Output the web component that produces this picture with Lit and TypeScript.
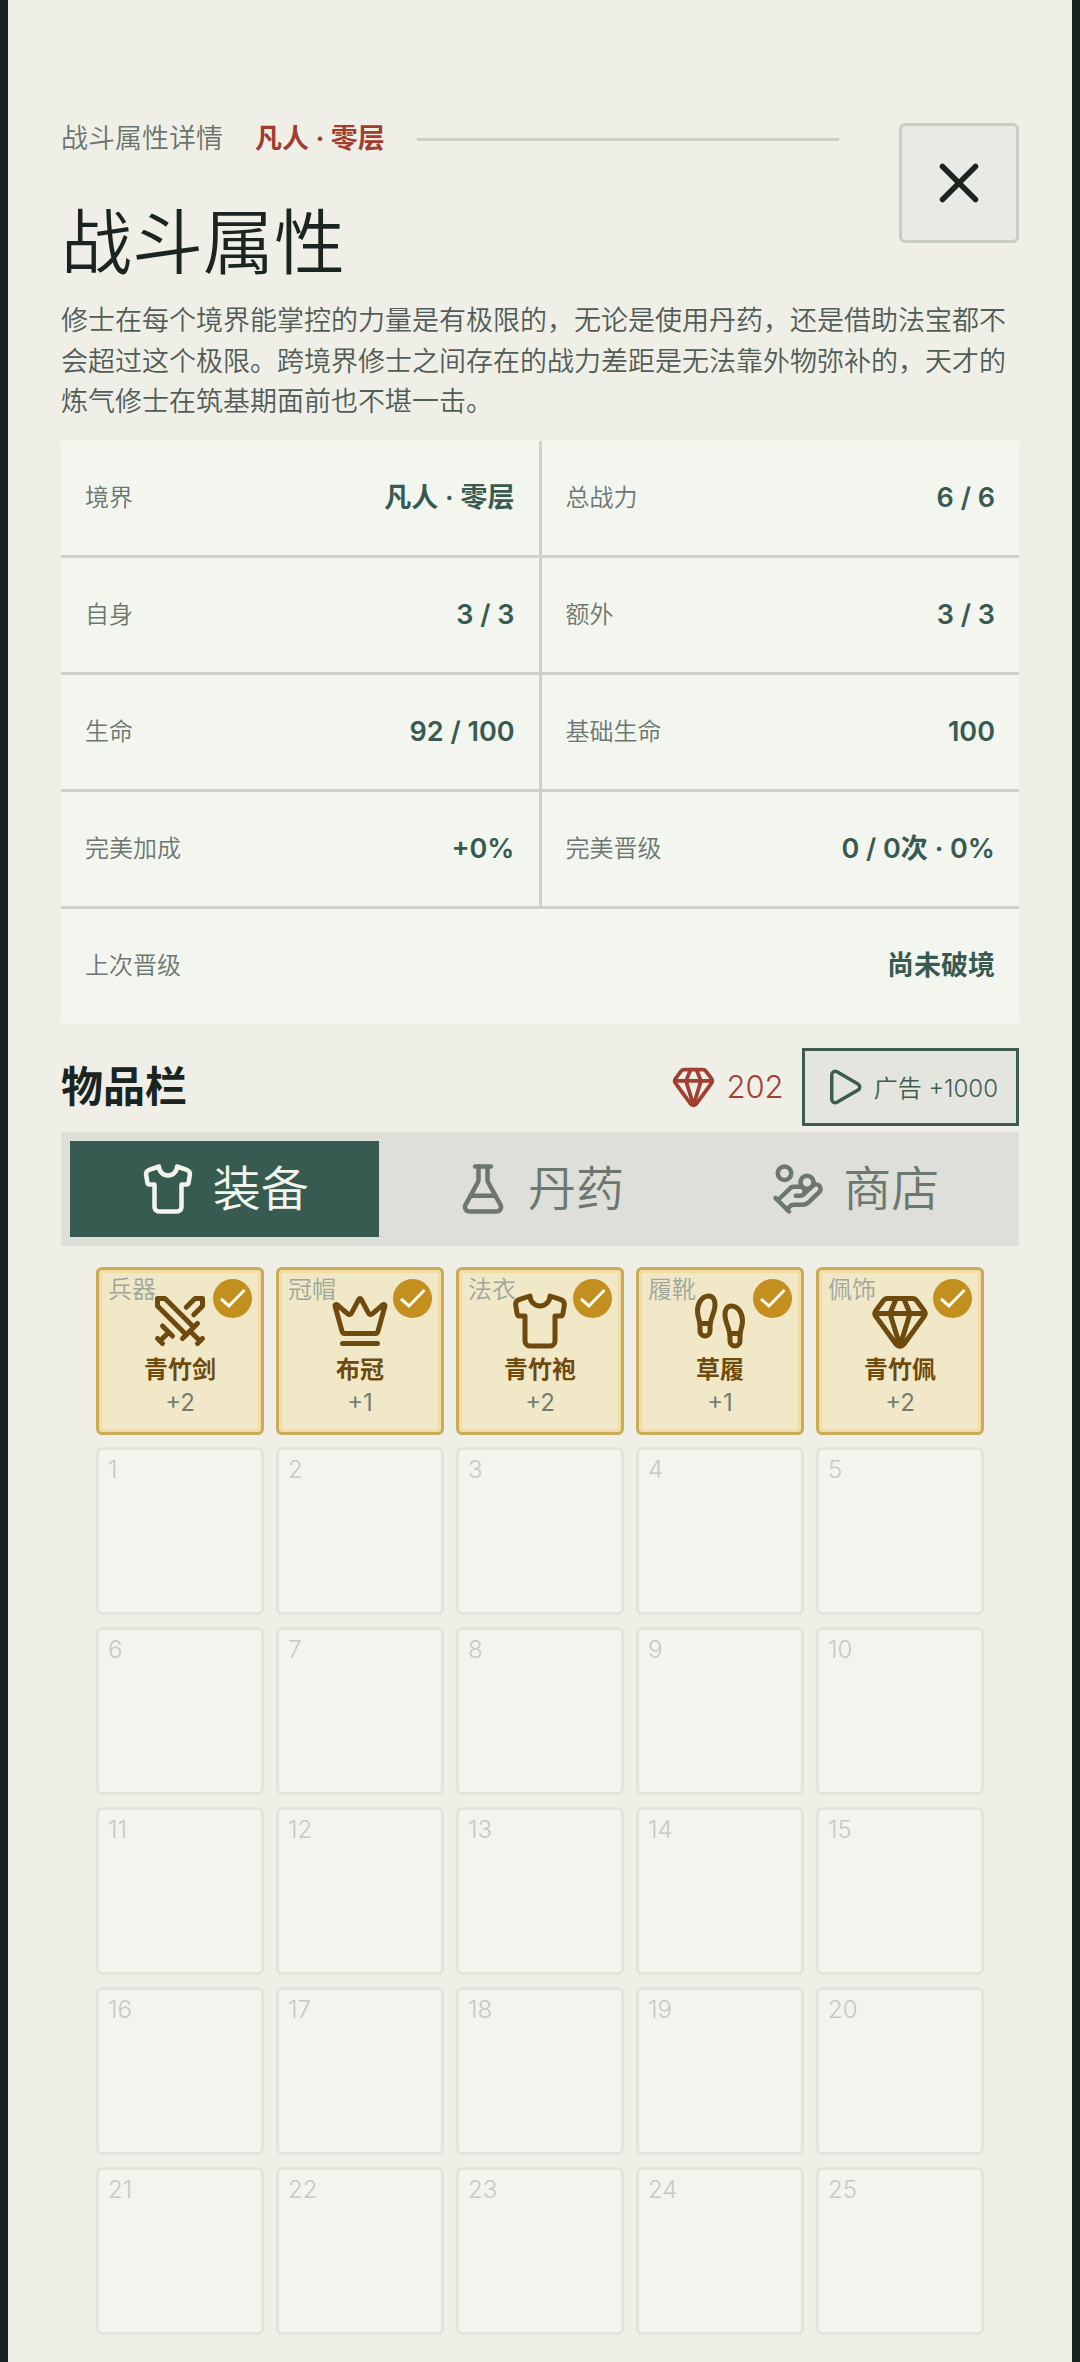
import { LitElement, html, css, svg, nothing, type SVGTemplateResult } from "lit";
import { customElement, property, state } from "lit/decorators.js";
import { classMap } from "lit/directives/class-map.js";

const ICONS: Record<string, SVGTemplateResult> = {
  close: svg`<path d="M18 6 6 18"/><path d="m6 6 12 12"/>`,
  play: svg`<path d="M5 5a2 2 0 0 1 3.008-1.728l11.997 6.998a2 2 0 0 1 .003 3.458l-12 7A2 2 0 0 1 5 19z"/>`,
  gem: svg`<path d="M10.5 3 8 9l4 13 4-13-2.5-6"/><path d="M17 3a2 2 0 0 1 1.6.8l3 4a2 2 0 0 1 .013 2.382l-7.99 10.986a2 2 0 0 1-3.247 0l-7.99-10.986A2 2 0 0 1 2.4 7.8l2.998-3.997A2 2 0 0 1 7 3z"/><path d="M2 9h20"/>`,
  shirt: svg`<path d="M20.38 3.46 16 2a4 4 0 0 1-8 0L3.62 3.46a2 2 0 0 0-1.34 2.23l.58 3.47a1 1 0 0 0 .99.84H6v10c0 1.1.9 2 2 2h8a2 2 0 0 0 2-2V10h2.15a1 1 0 0 0 .99-.84l.58-3.47a2 2 0 0 0-1.34-2.23z"/>`,
  flask: svg`<path d="M14 2v6a2 2 0 0 0 .245.96l5.51 10.08A2 2 0 0 1 18 22H6a2 2 0 0 1-1.755-2.96l5.51-10.08A2 2 0 0 0 10 8V2"/><path d="M6.453 15h11.094"/><path d="M8.5 2h7"/>`,
  coins: svg`<path d="M11 15h2a2 2 0 1 0 0-4h-3c-.6 0-1.1.2-1.4.6L3 17"/><path d="m7 21 1.6-1.4c.3-.4.8-.6 1.4-.6h4c1.1 0 2.1-.4 2.8-1.2l4.6-4.4a2 2 0 0 0-2.75-2.91l-4.2 3.9"/><path d="m2 16 6 6"/><circle cx="16" cy="9" r="2.9"/><circle cx="6" cy="5" r="3"/>`,
  swords: svg`<polyline points="14.5 17.5 3 6 3 3 6 3 17.5 14.5"/><path d="M13 19l6-6M16 16l4 4M19 21l2-2"/><polyline points="14.5 6.5 18 3 21 3 21 6 17.5 9.5"/><path d="M5 14l4 4M7 17l-3 3M3 19l2 2"/>`,
  crown: svg`<path d="M11.562 3.266a.5.5 0 0 1 .876 0L15.39 8.87a1 1 0 0 0 1.516.294L21.183 5.5a.5.5 0 0 1 .798.519l-2.834 10.246a1 1 0 0 1-.956.734H5.81a1 1 0 0 1-.957-.734L2.02 6.02a.5.5 0 0 1 .798-.519l4.276 3.664a1 1 0 0 0 1.516-.294z"/><path d="M5 21h14"/>`,
  footprints: svg`<path d="M4 16v-2.38C4 11.5 2.97 10.5 3 8c.03-2.72 1.49-6 4.5-6C9.37 2 10 3.8 10 5.5c0 3.11-2 5.66-2 8.68V16a2 2 0 1 1-4 0Z"/><path d="M20 20v-2.38c0-2.12 1.03-3.12 1-5.62-.03-2.72-1.49-6-4.5-6C14.63 6 14 7.8 14 9.5c0 3.11 2 5.66 2 8.68V20a2 2 0 1 0 4 0Z"/><path d="M16 17h4"/><path d="M4 13h4"/>`,
};

@customElement("line-icon")
class LineIcon extends LitElement {
  @property() name = "";

  static styles = css`
    :host {
      display: block;
      flex: none;
    }
    .glyph {
      display: block;
      width: 100%;
      height: 100%;
      fill: none;
      stroke: currentColor;
      stroke-width: 2;
      stroke-linecap: round;
      stroke-linejoin: round;
    }
  `;

  render() {
    return html`<svg class="glyph" viewBox="0 0 24 24" aria-hidden="true">${ICONS[this.name]}</svg>`;
  }
}

interface Stat {
  label: string;
  value: string;
  wide?: boolean;
}

const STATS: Stat[] = [
  { label: "境界", value: "凡人 · 零层" },
  { label: "总战力", value: "6 / 6" },
  { label: "自身", value: "3 / 3" },
  { label: "额外", value: "3 / 3" },
  { label: "生命", value: "92 / 100" },
  { label: "基础生命", value: "100" },
  { label: "完美加成", value: "+0%" },
  { label: "完美晋级", value: "0 / 0次 · 0%" },
  { label: "上次晋级", value: "尚未破境", wide: true },
];

const TABS = [
  { label: "装备", icon: "shirt" },
  { label: "丹药", icon: "flask" },
  { label: "商店", icon: "coins" },
];

const GEAR = [
  { slot: "兵器", name: "青竹剑", bonus: "+2", icon: "swords" },
  { slot: "冠帽", name: "布冠", bonus: "+1", icon: "crown" },
  { slot: "法衣", name: "青竹袍", bonus: "+2", icon: "shirt" },
  { slot: "履靴", name: "草履", bonus: "+1", icon: "footprints" },
  { slot: "佩饰", name: "青竹佩", bonus: "+2", icon: "gem" },
];

const EMPTY_SLOTS = Array.from({ length: 25 }, (_, i) => i + 1);

@customElement("app-root")
class AppRoot extends LitElement {
  @state() private tab = 0;

  static styles = css`
    :host {
      display: block;
      box-sizing: border-box;
      min-height: 100vh;
      padding: 0 8px;
      background: #1a2321;
      font-family: Inter, "Noto Sans CJK SC", sans-serif;
      font-size: 27px;
      color: #1a2421;
    }
    * {
      box-sizing: border-box;
      margin: 0;
      padding: 0;
    }
    button {
      font: inherit;
      color: inherit;
      border: 0;
      background: none;
      cursor: pointer;
    }
    .panel {
      min-height: 100vh;
      padding: 123px 53px 27px;
      background: #f0efe7;
    }
    .header {
      display: grid;
      grid-template-columns: 1fr auto;
      column-gap: 60px;
      align-items: start;
    }
    .crumb {
      display: flex;
      align-items: center;
      gap: 32px;
      line-height: 32px;
      font-weight: 350;
      color: #6a746e;
    }
    .rank {
      font-weight: 700;
      color: #a03c30;
    }
    .rule {
      flex: 1;
      height: 3px;
      background: #ced0c8;
    }
    .title {
      margin-top: 48px;
      font-size: 71px;
      font-weight: 350;
      line-height: 78px;
    }
    .close {
      display: grid;
      place-items: center;
      width: 120px;
      height: 120px;
      border: 3px solid #c9cdc6;
      border-radius: 6px;
      background: #e8ebe4;
    }
    .close-icon {
      width: 66px;
      height: 66px;
    }
    .intro {
      margin-top: 20px;
      font-weight: 350;
      line-height: 1.5;
      color: #505d56;
    }
    .stats {
      display: grid;
      grid-template-columns: 1fr 1fr;
      gap: 3px;
      margin-top: 18px;
      background: #cdd1c9;
    }
    .stat {
      display: flex;
      align-items: center;
      justify-content: space-between;
      padding: 36px 24px;
      line-height: 42px;
      background: #f2f6ee;
    }
    .wide {
      grid-column: 1 / -1;
    }
    .stat-label {
      font-size: 24px;
      font-weight: 350;
      color: #6c7771;
    }
    .stat-value {
      font-weight: 600;
      color: #385a50;
    }
    .bag-head {
      display: flex;
      align-items: center;
      margin-top: 25px;
    }
    .bag-title {
      flex: 1;
      font-size: 42px;
      font-weight: 700;
      line-height: 48px;
    }
    .wallet {
      display: flex;
      align-items: center;
      gap: 10px;
      margin-right: 18px;
      font-size: 31px;
      font-weight: 350;
      color: #a03f32;
    }
    .wallet-icon {
      width: 45px;
      height: 45px;
    }
    .ad {
      display: flex;
      align-items: center;
      gap: 9px;
      padding: 15px 18px;
      border: 3px solid #3d5c50;
      background: #e4e5de;
      font-size: 24px;
      font-weight: 350;
      color: #3d5c50;
    }
    .ad-icon {
      width: 42px;
      height: 42px;
    }
    .tabs {
      display: grid;
      grid-template-columns: repeat(3, 1fr);
      gap: 6px;
      margin-top: 6px;
      padding: 9px;
      background: #dddfd8;
    }
    .tab {
      display: flex;
      align-items: center;
      justify-content: center;
      gap: 18px;
      padding: 21px 0;
      font-size: 48px;
      line-height: 54px;
      font-weight: 350;
      color: #6c7770;
    }
    .tab.active {
      background: #385b51;
      color: #f2f6ee;
    }
    .tab-icon {
      width: 54px;
      height: 54px;
    }
    .slots {
      display: grid;
      grid-template-columns: repeat(5, 1fr);
      gap: 12px;
      margin-top: 21px;
      padding: 0 35px;
      list-style: none;
      font-size: 24px;
    }
    .slot {
      aspect-ratio: 1;
    }
    .empty {
      padding: 8px 9px;
      border: 3px solid #e2e4dd;
      border-radius: 6px;
      background: #f3f4ee;
      font-weight: 350;
      line-height: 24px;
      color: #c6c9c2;
    }
    .gear {
      position: relative;
      display: flex;
      flex-direction: column;
      align-items: center;
      width: 100%;
      height: 100%;
      padding-top: 21px;
      border: 3px solid #c9ab57;
      border-radius: 6px;
      background: #f1e8c8;
      box-shadow: inset 0 0 0 3px #f2dca3;
      line-height: 33px;
      color: #6e4a0e;
    }
    .gear-slot {
      position: absolute;
      top: 8px;
      left: 9px;
      line-height: 24px;
      font-weight: 350;
      color: #a0a69c;
    }
    .gear-icon {
      width: 60px;
      height: 60px;
      margin-bottom: 2px;
    }
    .gear-name {
      font-weight: 700;
    }
    .gear-bonus {
      color: #747d75;
    }
    .badge {
      position: absolute;
      top: 9px;
      right: 9px;
      width: 39px;
      height: 39px;
    }
    .badge-disc {
      fill: #c3901f;
    }
    .badge-tick {
      fill: none;
      stroke: #fffaf0;
      stroke-width: 3;
    }
  `;

  render() {
    return html`
      <main class="panel">
        <header class="header">
          <div>
            <div class="crumb">
              <span>战斗属性详情</span>
              <strong class="rank">凡人 · 零层</strong>
              <span class="rule"></span>
            </div>
            <h1 class="title">战斗属性</h1>
          </div>
          <button class="close" type="button" aria-label="关闭">
            <line-icon class="close-icon" name="close"></line-icon>
          </button>
        </header>

        <p class="intro">
          修士在每个境界能掌控的力量是有极限的，无论是使用丹药，还是借助法宝都不会超过这个极限。跨境界修士之间存在的战力差距是无法靠外物弥补的，天才的炼气修士在筑基期面前也不堪一击。
        </p>

        <dl class="stats">
          ${STATS.map(
            (s) => html`
              <div class=${classMap({ stat: true, wide: !!s.wide })}>
                <dt class="stat-label">${s.label}</dt>
                <dd class="stat-value">${s.value}</dd>
              </div>
            `,
          )}
        </dl>

        <section>
          <div class="bag-head">
            <h2 class="bag-title">物品栏</h2>
            <span class="wallet">
              <line-icon class="wallet-icon" name="gem"></line-icon>
              <span>202</span>
            </span>
            <button class="ad" type="button">
              <line-icon class="ad-icon" name="play"></line-icon>
              <span>广告 +1000</span>
            </button>
          </div>

          <div class="tabs" role="tablist">
            ${TABS.map(
              (t, i) => html`
                <button
                  class=${classMap({ tab: true, active: i === this.tab })}
                  type="button"
                  role="tab"
                  aria-selected=${i === this.tab ? "true" : "false"}
                  @click=${() => (this.tab = i)}
                >
                  <line-icon class="tab-icon" name=${t.icon}></line-icon>
                  <span>${t.label}</span>
                </button>
              `,
            )}
          </div>

          <ul class="slots">
            ${this.tab === 0
              ? GEAR.map(
                  (g) => html`
                    <li class="slot">
                      <button class="gear" type="button">
                        <span class="gear-slot">${g.slot}</span>
                        <line-icon class="gear-icon" name=${g.icon}></line-icon>
                        <span class="gear-name">${g.name}</span>
                        <span class="gear-bonus">${g.bonus}</span>
                        <svg class="badge" viewBox="0 0 39 39" aria-hidden="true">
                          <circle class="badge-disc" cx="19.5" cy="19.5" r="19.5" />
                          <polyline class="badge-tick" points="8 20 16 27 31.5 11" />
                        </svg>
                      </button>
                    </li>
                  `,
                )
              : nothing}
            ${EMPTY_SLOTS.map((n) => html`<li class="slot empty">${n}</li>`)}
          </ul>
        </section>
      </main>
    `;
  }
}
